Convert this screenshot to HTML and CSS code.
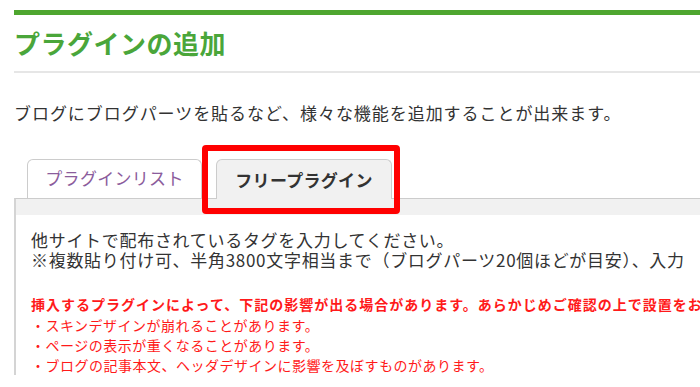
FILE: index.html
```html
<!DOCTYPE html>
<html lang="ja">
<head>
<meta charset="utf-8">
<title>プラグインの追加</title>
<link rel="stylesheet" href="styles.css">
</head>
<body>
<div class="page">
  <div class="topbar"></div>
  <h1 class="title">プラグインの追加</h1>
  <hr class="rule">
  <p class="lead">ブログにブログパーツを貼るなど、様々な機能を追加することが出来ます。</p>
  <div class="tabs">
    <div class="tab tab-inactive">プラグインリスト</div>
    <div class="tab tab-active">フリープラグイン<span class="highlight"></span></div>
  </div>
  <div class="panel">
    <div class="panel-strip"></div>
    <div class="panel-body">
      <p class="desc">他サイトで配布されているタグを入力してください。</p>
      <p class="desc">※複数貼り付け可、半角3800文字相当まで（ブログパーツ20個ほどが目安）、入力</p>
      <div class="warn">
        <p class="warn-head">挿入するプラグインによって、下記の影響が出る場合があります。あらかじめご確認の上で設置をお願いします。</p>
        <p class="warn-item">・スキンデザインが崩れることがあります。</p>
        <p class="warn-item">・ページの表示が重くなることがあります。</p>
        <p class="warn-item">・ブログの記事本文、ヘッダデザインに影響を及ぼすものがあります。</p>
      </div>
    </div>
  </div>
</div>
</body>
</html>
```

FILE: styles.css
```css
html, body {
  margin: 0;
  padding: 0;
  background: #ffffff;
  overflow: hidden;
}
body {
  font-family: "Noto Sans CJK JP", "Noto Sans", sans-serif;
  color: #333333;
}
.page {
  padding-left: 14px;
  width: 686px;
  overflow: hidden;
}
.topbar {
  margin-top: 10px;
  height: 5px;
  background: #4ea62f;
}
.title {
  margin: 12px 0 0 0;
  font-size: 26px;
  line-height: 31px;
  letter-spacing: 0.5px;
  font-weight: bold;
  color: #4aa63a;
}
.rule {
  margin: 13px 0 0 0;
  border: 0;
  height: 2px;
  background: #e6e6e6;
}
.lead {
  margin: 28px 0 0 0;
  font-size: 17px;
  line-height: 24px;
  letter-spacing: 0.95px;
  white-space: nowrap;
}
.tabs {
  display: flex;
  gap: 14px;
  padding-left: 13px;
  margin-top: 34px;
  position: relative;
  z-index: 1;
}
.tab {
  box-sizing: border-box;
  height: 40px;
  border: 1px solid #cccccc;
  border-bottom: 0;
  border-radius: 6px 6px 0 0;
  font-size: 17px;
  letter-spacing: 0.3px;
  text-align: center;
  white-space: nowrap;
  position: relative;
}
.tab-inactive {
  width: 175px;
  background: #ffffff;
  color: #8b5c9c;
  line-height: 36px;
  height: 39px;
}
.tab-active {
  width: 176px;
  background: #f1f1f1;
  color: #333333;
  font-weight: bold;
  line-height: 40px;
}
.highlight {
  position: absolute;
  left: -15px;
  top: -15px;
  width: 198px;
  height: 69px;
  box-sizing: border-box;
  border: 6px solid #ff0000;
  border-radius: 4px;
}
.panel {
  border-top: 1px solid #cccccc;
  border-left: 2px solid #d4d4d4;
  margin-top: -1px;
}
.panel-strip {
  height: 16px;
  background: #f1f1f1;
}
.panel-body {
  padding: 15px 0 0 15px;
}
.desc {
  margin: 0;
  font-size: 17px;
  line-height: 20px;
  letter-spacing: 0.7px;
  white-space: nowrap;
}
.warn {
  margin-top: 23px;
  color: #ff1a1a;
  font-size: 14px;
  white-space: nowrap;
}
.warn p {
  margin: 0;
}
.warn-head {
  font-weight: bold;
  letter-spacing: 1px;
  line-height: 22px;
}
.warn-item {
  line-height: 20px;
  letter-spacing: 0.5px;
}
```
